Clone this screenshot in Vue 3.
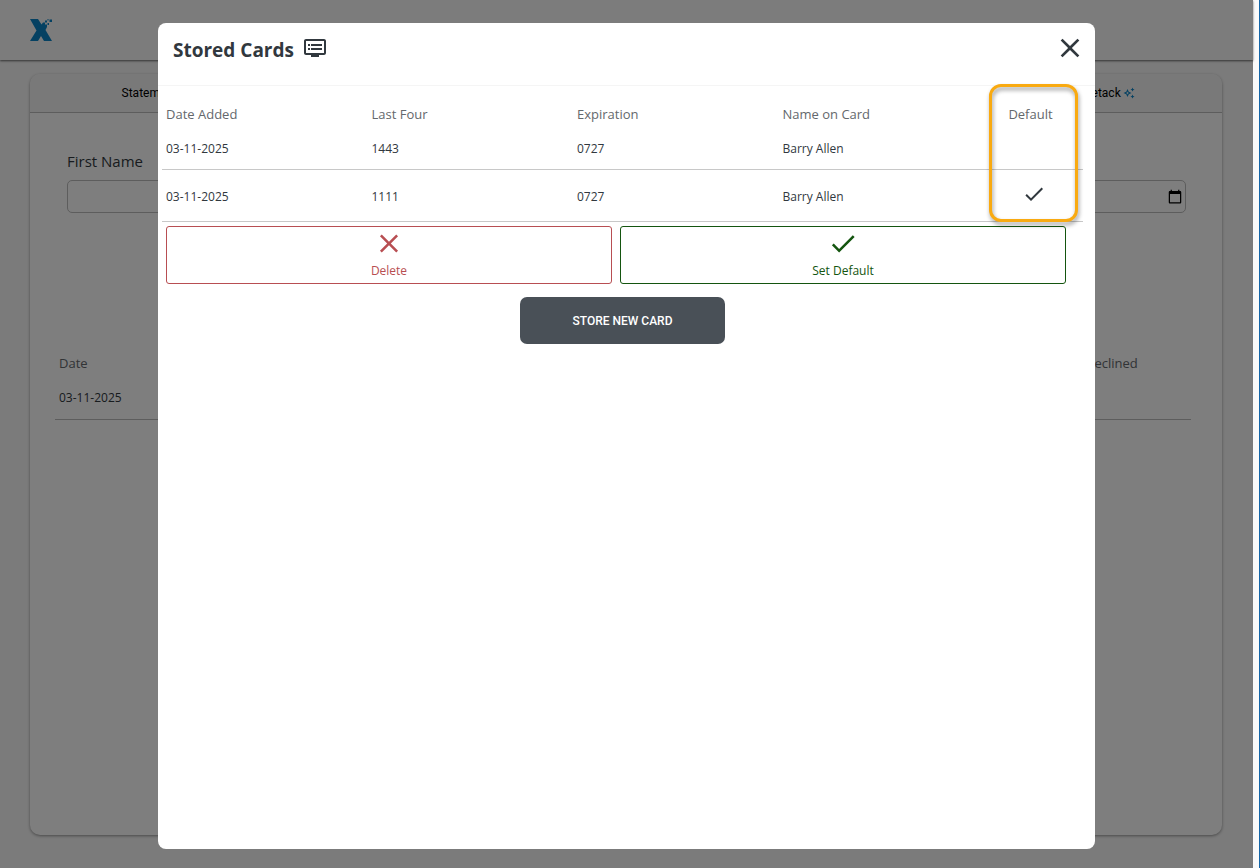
<template>
  <div class="shell">
    <div class="page">
      <header class="topbar">
        <a href="#" class="logo" aria-label="Home">
          <svg width="22" height="22" viewBox="0 0 22 22">
            <path fill="#0a82c4" d="M0 0H8L11.500 5.500L13 3.500H15V5.500H17V8L15.500 11L22 22H14L11 17L8 22H0L6.500 11.500Z" />
            <path fill="#0a82c4" d="M15 1.500H17V3.500H15ZM17.500 4H19V6H17.500ZM17.500 0H18.500V1.500H17.500ZM19.500 .5H22V3H19.500Z" />
          </svg>
        </a>
      </header>

      <main class="panel">
        <nav class="tabs">
          <a v-for="(tab, i) in tabs" :key="i" href="#" class="tab">
            {{ tab.label }}
            <svg v-if="tab.sparkle" width="12" height="12" viewBox="0 0 24 24">
              <path
                fill="#0a82c4"
                d="M19 9l1.25-2.75L23 5l-2.75-1.25L19 1l-1.25 2.75L15 5l2.75 1.25L19 9zm0 6l-1.25 2.75L15 19l2.75 1.25L19 23l1.25-2.75L23 19l-2.75-1.25L19 15zm-7.500-5.500L9 4 6.500 9.500 1 12l5.500 2.500L9 20l2.500-5.500L17 12l-5.500-2.500zm-1.510 3.490L9 15.170l-.99-2.180L5.830 12l2.180-.99L9 8.830l.99 2.180 2.180.99-2.180.99z"
              />
            </svg>
          </a>
        </nav>

        <form class="search">
          <div class="field">
            <label for="first-name">First Name</label>
            <input id="first-name" type="text" />
          </div>
          <div class="field">
            <input id="search-date" type="date" aria-label="Date" />
          </div>
        </form>

        <table class="history">
          <thead>
            <tr>
              <th>Date</th>
              <th class="declined">Declined</th>
            </tr>
          </thead>
          <tbody>
            <tr>
              <td>03-11-2025</td>
              <td></td>
            </tr>
          </tbody>
        </table>
      </main>
    </div>

    <div class="overlay">
      <section class="modal" role="dialog" aria-labelledby="modal-title">
        <div class="modal-header">
          <h2 id="modal-title">Stored Cards</h2>
          <svg width="24" height="24" viewBox="0 0 24 24" fill="#31383e">
            <path
              d="M21 3H3c-1.100 0-2 .9-2 2v12c0 1.100.9 2 2 2h5v2h8v-2h5c1.100 0 1.990-.9 1.990-2L23 5c0-1.100-.9-2-2-2zm0 14H3V5h18v12zm-2-9H8v2h11V8zm0 4H8v2h11v-2zM7 8H5v2h2V8zm0 4H5v2h2v-2z"
            />
          </svg>
          <button type="button" class="close" aria-label="Close">
            <svg width="32" height="32" viewBox="0 0 24 24"><path fill="#31383e" :d="icons.close" /></svg>
          </button>
        </div>

        <div class="modal-body">
          <div class="cards-wrap">
            <table class="cards">
              <thead>
                <tr>
                  <th>Date Added</th>
                  <th>Last Four</th>
                  <th>Expiration</th>
                  <th>Name on Card</th>
                  <th class="default">Default</th>
                </tr>
              </thead>
              <tbody>
                <tr v-for="card in cards" :key="card.lastFour" :class="{ selected: card.isDefault }">
                  <td>{{ card.added }}</td>
                  <td>{{ card.lastFour }}</td>
                  <td>{{ card.expiration }}</td>
                  <td>{{ card.name }}</td>
                  <td class="default">
                    <svg v-if="card.isDefault" width="24" height="24" viewBox="0 0 24 24">
                      <path fill="#31383e" :d="icons.check" />
                    </svg>
                  </td>
                </tr>
              </tbody>
            </table>
            <div class="highlight"></div>
          </div>

          <div class="actions">
            <button type="button" class="action delete">
              <svg width="32" height="32" viewBox="0 0 24 24"><path fill="currentColor" :d="icons.close" /></svg>
              <span>Delete</span>
            </button>
            <button type="button" class="action set-default">
              <svg width="32" height="32" viewBox="0 0 24 24"><path fill="currentColor" :d="icons.check" /></svg>
              <span>Set Default</span>
            </button>
          </div>

          <button type="button" class="store">STORE NEW CARD</button>
        </div>
      </section>
    </div>
  </div>
</template>

<script setup>
import { ref } from 'vue'

const tabs = [
  { label: 'Statement' },
  { label: '' },
  { label: '' },
  { label: '' },
  { label: 'Timetack', sparkle: true }
]

const cards = ref([
  { added: '03-11-2025', lastFour: '1443', expiration: '0727', name: 'Barry Allen', isDefault: false },
  { added: '03-11-2025', lastFour: '1111', expiration: '0727', name: 'Barry Allen', isDefault: true }
])

const icons = {
  close: 'M19 6.410L17.590 5 12 10.590 6.410 5 5 6.410 10.590 12 5 17.590 6.410 19 12 13.410 17.590 19 19 17.590 13.410 12z',
  check: 'M9 16.170L4.830 12l-1.420 1.410L9 19 21 7l-1.410-1.410z'
}
</script>

<style>
body {
  margin: 0;
}
</style>

<style scoped>
.shell {
  position: relative;
  display: flex;
  min-height: 100vh;
  box-sizing: border-box;
  padding-right: 6px;
  border-right: 1px solid #1566a8;
  background: #fafafa;
  font-family: "Open Sans", "Noto Sans", sans-serif;
  font-size: 12px;
  color: #31383e;
}

.page {
  flex: 1;
  display: flex;
  flex-direction: column;
  background: #f6f6f6;
}

.topbar {
  display: flex;
  align-items: center;
  height: 60px;
  padding: 0 30px;
  background: #f8f8f8;
  box-shadow: 0 1px 2px rgba(0, 0, 0, 0.6);
}

.logo {
  display: flex;
}

.panel {
  flex: 1;
  margin: 14px 31px 33px 30px;
  border-radius: 10px;
  background: #fcfcfc;
  box-shadow: 0 1px 3px rgba(0, 0, 0, 0.4);
}

.tabs {
  display: flex;
  height: 38px;
  border-bottom: 1px solid #bbb;
  border-radius: 10px 10px 0 0;
  background: #f2f2f2;
}

.tab {
  flex: 1;
  display: flex;
  align-items: center;
  justify-content: center;
  gap: 2px;
  font-family: Roboto, sans-serif;
  font-size: 12px;
  color: #000;
  text-decoration: none;
}

.search {
  display: grid;
  grid-template-columns: repeat(2, 1fr);
  align-items: end;
  gap: 40px;
  padding: 38px 36px 0 37px;
}

.field {
  display: flex;
  flex-direction: column;
  gap: 8px;
}

.field label {
  font-size: 15px;
  line-height: 21px;
}

.field input {
  box-sizing: border-box;
  height: 33px;
  padding: 0;
  border: 1px solid #bbb;
  border-radius: 5px;
  background: transparent;
  font-size: 16px;
}

.history {
  width: calc(100% - 56px);
  margin: 137px 31px 0 25px;
  border-collapse: collapse;
  text-align: left;
}

.history th {
  height: 26px;
  padding: 0 4px;
  font-size: 13px;
  font-weight: 400;
  color: #64686c;
}

.history td {
  height: 43px;
  padding: 0 4px;
  border-bottom: 1px solid #bbb;
}

.history .declined {
  width: 102px;
}

.overlay {
  position: absolute;
  inset: 0 6px 0 0;
  display: flex;
  padding: 23px 158px 19px;
  background: rgba(0, 0, 0, 0.5);
}

.modal {
  flex: 1;
  border-radius: 8px;
  background: #fff;
}

.modal-header {
  display: flex;
  align-items: center;
  box-sizing: border-box;
  height: 63px;
  padding: 0 9px 12px 15px;
  border-bottom: 1px solid #f5f5f5;
}

.modal-header h2 {
  margin: 0 9px 0 0;
  padding-top: 4px;
  font-size: 19px;
  line-height: 24px;
}

.close {
  display: flex;
  margin-left: auto;
  padding: 0;
  border: 0;
  background: none;
}

.modal-body {
  display: flex;
  flex-direction: column;
  padding: 15px 12px 0 4px;
}

.cards-wrap {
  position: relative;
}

.cards {
  width: 100%;
  table-layout: fixed;
  border-collapse: separate;
  border-spacing: 0;
  text-align: left;
}

.cards th,
.cards td {
  box-sizing: border-box;
  padding: 0 4px;
}

.cards th {
  height: 26px;
  font-size: 13px;
  font-weight: 400;
  color: #64686c;
}

.cards td {
  height: 43px;
  border-bottom: 1px solid #c8c8c8;
}

.cards .selected td {
  height: 52px;
  padding-top: 2px;
}

.cards .default {
  width: 99px;
  text-align: center;
}

.cards th.default {
  padding-right: 10px;
}

.cards .selected .default {
  padding-top: 12px;
  vertical-align: top;
}

.cards .default svg {
  display: block;
  margin: 0 auto;
}

.highlight {
  position: absolute;
  top: -17px;
  right: 5px;
  bottom: 0;
  width: 89px;
  box-sizing: border-box;
  border: 3px solid #f9aa11;
  border-radius: 12px;
  filter: drop-shadow(1px 3px 2px rgba(0, 0, 0, 0.4));
  pointer-events: none;
}

.actions {
  display: flex;
  gap: 8px;
  padding: 4px 17px 0 4px;
}

.action {
  flex: 1;
  display: flex;
  flex-direction: column;
  align-items: center;
  height: 58px;
  padding: 1px 0 0;
  border: 1px solid currentColor;
  border-radius: 3px;
  background: #fff;
  font-family: inherit;
  font-size: 12px;
  line-height: 24px;
}

.delete {
  color: #b84e52;
}

.set-default {
  color: #14550f;
}

.store {
  align-self: center;
  height: 47px;
  margin-top: 13px;
  padding: 0 52px;
  border: 0;
  border-radius: 7px;
  background: #495057;
  font-family: Roboto, sans-serif;
  font-size: 12px;
  font-weight: 500;
  color: #fff;
}
</style>
